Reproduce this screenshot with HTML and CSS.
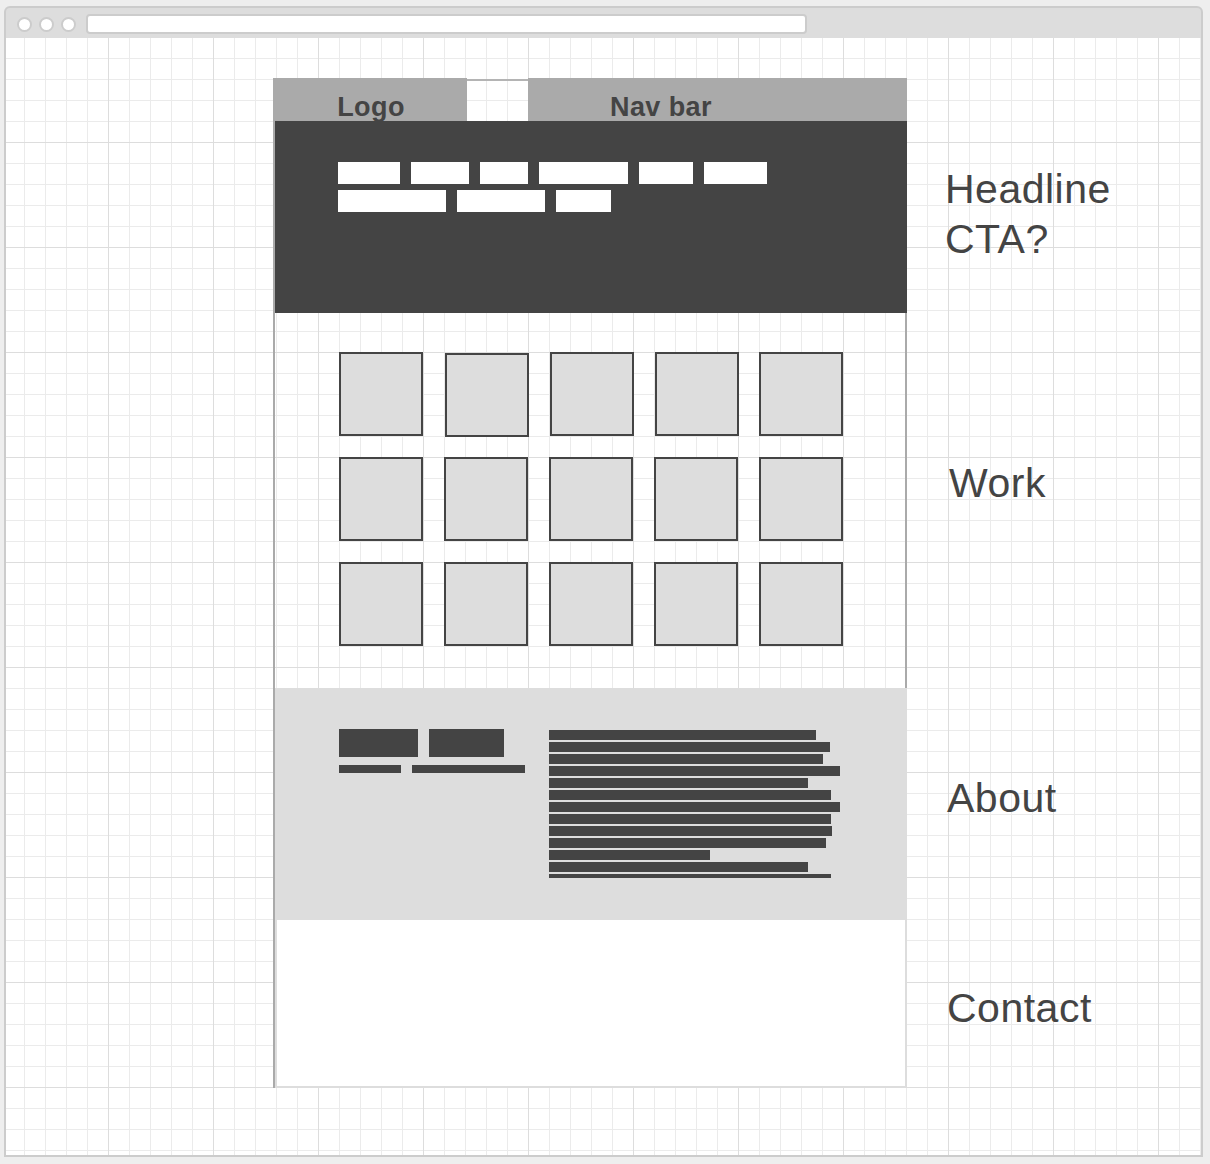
FILE: index.html
```html
<!DOCTYPE html>
<html lang="en">
<head>
    <meta charset="UTF-8">
    <meta name="viewport" content="width=device-width, initial-scale=1.0">
    <title>Wireframe</title>
    <link rel="stylesheet" href="styles.css">
</head>
<body>
    <div class="window">
        <div class="titlebar">
            <span class="dot"></span>
            <span class="dot"></span>
            <span class="dot"></span>
            <div class="address"></div>
        </div>
        <div class="canvas">
            <div class="sheet">
                <!-- header + hero -->
                <div class="row">
                    <div class="frame">
                        <div class="header">
                            <div class="logo">Logo</div>
                            <div class="header-gap"></div>
                            <div class="nav">Nav bar</div>
                        </div>
                        <div class="hero">
                            <div class="hero-row">
                                <span class="bar" style="width: 62px"></span>
                                <span class="bar" style="width: 58px"></span>
                                <span class="bar" style="width: 48px"></span>
                                <span class="bar" style="width: 89px"></span>
                                <span class="bar" style="width: 54px"></span>
                                <span class="bar" style="width: 63px"></span>
                            </div>
                            <div class="hero-row">
                                <span class="bar" style="width: 108px"></span>
                                <span class="bar" style="width: 88px"></span>
                                <span class="bar" style="width: 55px"></span>
                            </div>
                        </div>
                    </div>
                    <div class="note note-hero">Headline<br>CTA?</div>
                </div>

                <!-- work -->
                <div class="row">
                    <div class="frame work">
                        <div class="tiles">
                            <div class="tile"></div>
                            <div class="tile nudge"></div>
                            <div class="tile nudge-x"></div>
                            <div class="tile nudge-x"></div>
                            <div class="tile"></div>
                            <div class="tile"></div>
                            <div class="tile"></div>
                            <div class="tile"></div>
                            <div class="tile"></div>
                            <div class="tile"></div>
                            <div class="tile"></div>
                            <div class="tile"></div>
                            <div class="tile"></div>
                            <div class="tile"></div>
                            <div class="tile"></div>
                        </div>
                    </div>
                    <div class="note note-work">Work</div>
                </div>

                <!-- about -->
                <div class="row">
                    <div class="frame">
                        <div class="about">
                            <div class="about-left">
                                <div class="about-titles">
                                    <span class="block" style="width: 79px"></span>
                                    <span class="block" style="width: 75px"></span>
                                </div>
                                <div class="about-subs">
                                    <span class="sub" style="width: 62px"></span>
                                    <span class="sub" style="width: 113px"></span>
                                </div>
                            </div>
                            <div class="about-text">
                                <span class="line" style="width: 267px"></span>
                                <span class="line" style="width: 281px"></span>
                                <span class="line" style="width: 274px"></span>
                                <span class="line" style="width: 291px"></span>
                                <span class="line" style="width: 259px"></span>
                                <span class="line" style="width: 282px"></span>
                                <span class="line" style="width: 291px"></span>
                                <span class="line" style="width: 282px"></span>
                                <span class="line" style="width: 283px"></span>
                                <span class="line" style="width: 277px"></span>
                                <span class="line" style="width: 161px"></span>
                                <span class="line" style="width: 259px"></span>
                                <span class="line last" style="width: 282px"></span>
                            </div>
                        </div>
                    </div>
                    <div class="note note-about">About</div>
                </div>

                <!-- contact -->
                <div class="row">
                    <div class="frame">
                        <div class="contact"></div>
                    </div>
                    <div class="note note-contact">Contact</div>
                </div>
            </div>
        </div>
    </div>
</body>
</html>
```

FILE: styles.css
```css
* {
    margin: 0;
    box-sizing: border-box;
}

body {
    background: #eeeeee;
    font-family: 'Liberation Sans', Arial, sans-serif;
    color: #444444;
}

.window {
    margin: 6px 0 0 4px;
    width: 1199px;
    height: 1151px;
    border: 2px solid #cccccc;
    border-radius: 6px 6px 0 0;
    background: #dddddd;
    overflow: hidden;
}

.titlebar {
    height: 30px;
    padding: 2px 0 0 11px;
    display: flex;
    align-items: center;
    gap: 7px;
}

.dot {
    flex-shrink: 0;
    width: 15px;
    height: 15px;
    border-radius: 50%;
    background: white;
    border: 2px solid #cccccc;
}

.address {
    flex-shrink: 0;
    margin-left: 3px;
    width: 721px;
    height: 20px;
    background: white;
    border: 2px solid #cccccc;
    border-radius: 4px;
}

.canvas {
    height: 1117px;
    padding: 40px 0 0 267px;
    background-color: white;
    background-image:
        linear-gradient(to right, #dddddd 1px, transparent 1px),
        linear-gradient(to bottom, #dddddd 1px, transparent 1px),
        linear-gradient(to right, #ebebeb 1px, transparent 1px),
        linear-gradient(to bottom, #ebebeb 1px, transparent 1px);
    background-size: 105px 105px, 105px 105px, 21px 21px, 21px 21px;
    background-position: 102px 104px, 102px 104px, 18px 20px, 18px 20px;
}

.row {
    display: flex;
}

.frame {
    width: 634px;
    border-left: 2px solid #aaaaaa;
}

/* header */

.header {
    display: flex;
    height: 43px;
}

.logo,
.nav {
    background: #aaaaaa;
    font-weight: 700;
    font-size: 27px;
    line-height: 30px;
    letter-spacing: 0.4px;
    padding-top: 14px;
    overflow: hidden;
    white-space: nowrap;
}

.logo {
    width: 192px;
    text-align: center;
}

.header-gap {
    width: 61px;
    margin-top: 1px;
    border-top: 2px solid #b4b4b4;
}

.nav {
    flex: 1;
    padding-left: 82px;
}

.hero {
    height: 192px;
    background: #444444;
    padding: 41px 0 0 63px;
}

.hero-row {
    display: flex;
    gap: 11px;
    margin-bottom: 6px;
}

.bar {
    height: 22px;
    background: white;
}

/* work */

.work {
    height: 375px;
    border-right: 2px solid #aaaaaa;
}

.tiles {
    display: grid;
    grid-template-columns: repeat(5, 84px);
    grid-auto-rows: 84px;
    gap: 21px;
    padding: 39px 0 0 64px;
}

.tile {
    background: #dddddd;
    border: 2px solid #444444;
}

.tile.nudge {
    translate: 1px 1px;
}

.tile.nudge-x {
    translate: 1px 0;
}

/* about */

.about {
    height: 232px;
    background: #dddddd;
    display: flex;
    padding: 41px 0 0 64px;
}

.about-left {
    width: 210px;
}

.about-titles,
.about-subs {
    display: flex;
    gap: 11px;
}

.block {
    height: 28px;
    background: #444444;
}

.about-subs {
    margin-top: 8px;
}

.sub {
    height: 8px;
    background: #444444;
}

.about-text {
    display: flex;
    flex-direction: column;
    gap: 2px;
    margin-top: 1px;
}

.line {
    height: 10px;
    background: #444444;
}

.line.last {
    height: 4px;
}

/* contact */

.contact {
    height: 168px;
    background: white;
    border: 2px solid #dddddd;
    border-top: 0;
}

/* side notes */

.note {
    margin-left: 40px;
    font-size: 41px;
    line-height: 50px;
    letter-spacing: 0.5px;
    white-space: nowrap;
}

.note-hero {
    margin-left: 38px;
    padding-top: 86px;
}

.note-work {
    margin-left: 42px;
    padding-top: 145px;
}

.note-about {
    padding-top: 85px;
}

.note-contact {
    padding-top: 63px;
}
```
